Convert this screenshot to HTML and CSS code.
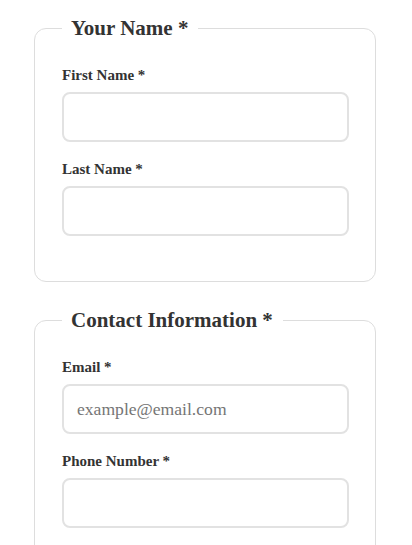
FILE: index.html
```html
<!DOCTYPE html>
<html lang="en">
<head>
<meta charset="utf-8">
<title>Form</title>
<link rel="stylesheet" href="styles.css">
</head>
<body>
<form class="form">
  <fieldset class="group">
    <legend class="group-title">Your Name *</legend>
    <div class="field">
      <label class="field-label" for="first">First Name *</label>
      <input class="field-input" id="first" type="text">
    </div>
    <div class="field">
      <label class="field-label" for="last">Last Name *</label>
      <input class="field-input" id="last" type="text">
    </div>
  </fieldset>
  <fieldset class="group">
    <legend class="group-title">Contact Information *</legend>
    <div class="field">
      <label class="field-label" for="email">Email *</label>
      <input class="field-input" id="email" type="email" placeholder="example@email.com">
    </div>
    <div class="field">
      <label class="field-label" for="phone">Phone Number *</label>
      <input class="field-input" id="phone" type="tel">
    </div>
  </fieldset>
</form>
</body>
</html>
```
FILE: styles.css
```css
html, body {
  margin: 0;
  padding: 0;
  background: #fff;
}
body {
  font-family: "Liberation Serif", "Times New Roman", serif;
  color: #333;
}
.form {
  padding: 16px 36px 0 34px;
  display: flex;
  flex-direction: column;
  gap: 26px;
}
.group {
  margin: 0;
  border: 1px solid #ddd;
  border-radius: 12px;
  padding: 26px 26px 27px 27px;
  min-width: 0;
}
.group-title {
  font-size: 21px;
  font-weight: bold;
  line-height: 24px;
  padding: 0 10px 0 9px;
  color: #333;
}
.field {
  margin-bottom: 18px;
}
.field-label {
  display: block;
  font-size: 15px;
  font-weight: bold;
  line-height: 19px;
  margin-bottom: 7px;
}
.field-input {
  display: block;
  box-sizing: border-box;
  width: 100%;
  height: 50px;
  margin: 0;
  border: 2px solid #e2e2e2;
  border-radius: 8px;
  padding: 0 13px;
  font-family: "Liberation Serif", "Times New Roman", serif;
  font-size: 17.6px;
  color: #333;
  background: #fff;
  outline: none;
}
.field-input::placeholder {
  color: #757575;
}
```
